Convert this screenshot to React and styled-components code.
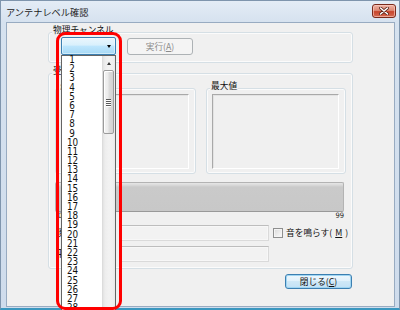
import React from 'react';
import styled, { createGlobalStyle } from 'styled-components';

const Global = createGlobalStyle`
  html, body { margin: 0; padding: 0; width: 400px; height: 310px; overflow: hidden; background: #ffffff; }
  body { font-family: "Noto Sans CJK JP", "Noto Sans", sans-serif; color: #000; }
  #root { width: 400px; height: 310px; }
`;

const ui = `"Noto Sans CJK JP", "Noto Sans", sans-serif`;
const narrow = `"Liberation Sans Narrow", "DejaVu Sans Condensed", "Liberation Sans", sans-serif`;

const Page = styled.div`
  position: relative;
  width: 400px;
  height: 310px;
  overflow: hidden;
`;

const Window = styled.div`
  box-sizing: border-box;
  width: 400px;
  height: 310px;
  display: flex;
  flex-direction: column;
  background: linear-gradient(180deg, #e4ecf6 0px, #d6e2ef 21px, #cfdcec 100%);
  border: 1px solid #7f95ad;
  border-bottom: 2px solid #3a97bf;
`;

const TitleBar = styled.div`
  height: 21px;
  flex: none;
  display: flex;
  justify-content: space-between;
  align-items: center;
  padding: 0 3px 0 5px;
`;

const TitleText = styled.span`
  font-family: ${ui};
  font-size: 9.2px;
  line-height: 12px;
  color: #1b1b1b;
  white-space: nowrap;
`;

const CloseBox = styled.div`
  box-sizing: border-box;
  width: 24px;
  height: 14px;
  align-self: flex-start;
  margin-top: 3px;
  border: 1px solid #7a2a1c;
  border-radius: 3px;
  background: linear-gradient(180deg, #eeb2a4 0%, #dd8a77 45%, #c8452c 55%, #d46a52 100%);
  box-shadow: inset 0 0 0 1px rgba(255, 210, 200, 0.6);
  display: flex;
  align-items: center;
  justify-content: center;
`;

const Client = styled.div`
  flex: 1;
  margin: 0 4px 1px 5px;
  border: 1px solid #98abc1;
  background: #f0f0f0;
  padding: 9px 0 0 41px;
  display: flex;
  flex-direction: column;
  align-items: flex-start;
`;

const Group = styled.div`
  box-sizing: border-box;
  width: ${p => p.$w}px;
  height: ${p => p.$h}px;
  margin-top: ${p => p.$mt || 0}px;
  border: 1px solid #d5dfe5;
  border-radius: 3px;
  box-shadow: inset 0 0 0 1px #fbfbfb;
  flex: none;
`;

const GroupLabel = styled.span`
  display: block;
  width: fit-content;
  height: 10px;
  margin: -8px 0 0 3px;
  padding: 0 1px;
  background: #f0f0f0;
  font-family: ${ui};
  font-size: 8.7px;
  line-height: 10px;
  white-space: nowrap;
  color: #111;
`;

const ChannelRow = styled.div`
  display: flex;
  align-items: flex-start;
  gap: 11px;
  margin: 2px 0 0 12px;
`;

const Combo = styled.div`
  box-sizing: border-box;
  width: 55px;
  height: 18px;
  border: 1px solid #3c7fb1;
  border-radius: 2px;
  background: linear-gradient(180deg, #eaf6fd 0%, #d9f0fc 45%, #bee6fd 50%, #a7d9f5 100%);
  box-shadow: inset 0 0 0 1px rgba(255, 255, 255, 0.45);
  display: flex;
  align-items: center;
  justify-content: flex-end;
  padding: 1px 4px 0 0;
`;

const ComboArrow = styled.span`
  width: 0;
  height: 0;
  border-left: 2.5px solid transparent;
  border-right: 2.5px solid transparent;
  border-top: 3px solid #000;
`;

const PushButton = styled.button`
  box-sizing: border-box;
  width: ${p => p.$w}px;
  height: ${p => p.$h}px;
  margin-top: ${p => p.$mt || 0}px;
  padding: 0;
  font-family: ${ui};
  font-size: 8.7px;
  line-height: 10px;
  border-radius: 3px;
  display: flex;
  align-items: center;
  justify-content: center;
  white-space: nowrap;
  color: ${p => (p.disabled ? '#8a8a8a' : '#111')};
  border: 1px solid ${p => (p.disabled ? '#adb2b5' : p.$default ? '#3c7fb1' : '#707070')};
  background: ${p =>
    p.disabled
      ? '#f4f4f4'
      : p.$default
      ? 'linear-gradient(180deg, #eef7fd 0%, #e1f1fb 45%, #cfe8f7 50%, #c2e1f5 100%)'
      : 'linear-gradient(180deg, #f2f2f2 0%, #ebebeb 45%, #dddddd 50%, #cfcfcf 100%)'};
  box-shadow: ${p => (p.$default ? 'inset 0 0 0 1px #9fd5f2' : 'none')};
  u { text-decoration-thickness: 1px; text-underline-offset: 1px; }
`;

const ValueRow = styled.div`
  display: flex;
  gap: 10px;
  margin: 12px 0 0 6px;
`;

const Sunken = styled.div`
  box-sizing: border-box;
  height: 75px;
  margin: 3px 6px 0 5px;
  border: 1px solid;
  border-color: #a9a9a9 #ffffff #ffffff #a9a9a9;
  box-shadow: 0 0 0 0 transparent, inset 1px 1px 0 #e3e3e3;
  background: #f0f0f0;
`;

const Progress = styled.div`
  box-sizing: border-box;
  width: 289px;
  height: 30px;
  margin: 8px 0 0 6px;
  border: 1px solid #b3b3b3;
  border-bottom-color: #999999;
  border-radius: 2px;
  background: linear-gradient(180deg, #e6e6e6 0px, #dadada 2px, #cacaca 4px, #c8c8c8 100%);
`;

const Scale = styled.div`
  box-sizing: border-box;
  width: 289px;
  height: 8px;
  margin-left: 6px;
  padding-left: 3px;
  display: flex;
  justify-content: space-between;
  font-family: ${narrow};
  font-size: 7.5px;
  line-height: 8px;
  color: #222;
`;

const FieldRow = styled.div`
  display: flex;
  align-items: center;
  height: 16px;
  margin: 5px 0 0 7px;
`;

const FieldLabel = styled.span`
  width: 64px;
  font-family: ${ui};
  font-size: 8.7px;
  line-height: 10px;
  white-space: nowrap;
  overflow: hidden;
`;

const TextField = styled.div`
  box-sizing: border-box;
  width: 149px;
  height: 16px;
  border: 1px solid #dadada;
  border-top-color: #bdbdbd;
  background: #f2f2f2;
  box-shadow: inset 0 0 0 1px #f7f7f7;
`;

const CheckLabel = styled.label`
  display: flex;
  align-items: center;
  gap: 3px;
  margin-left: 4px;
  font-family: ${ui};
  font-size: 8.7px;
  line-height: 10px;
  white-space: nowrap;
  color: #111;
  u { text-decoration-thickness: 1px; text-underline-offset: 1px; }
`;

const CheckBox = styled.span`
  box-sizing: border-box;
  width: 10px;
  height: 10px;
  border: 1px solid #8e8f8f;
  background: linear-gradient(135deg, #d8d8d8 0%, #eeeeee 60%, #fafafa 100%);
  box-shadow: inset 0 0 0 1px #f4f4f4;
`;

const Footer = styled.div`
  width: 305px;
  margin-top: 5px;
  display: flex;
  justify-content: flex-end;
  padding-right: 1px;
  box-sizing: border-box;
`;

/* drop-down list popup (overlay) */
const DropList = styled.div`
  position: absolute;
  left: 61px;
  top: 55px;
  width: 55px;
  height: 262px;
  box-sizing: border-box;
  border: 1px solid #646464;
  background: #ffffff;
  display: flex;
`;

const Items = styled.ul`
  flex: 1;
  list-style: none;
  margin: -1px 0 0 0;
  padding: 0 0 0 5px;
`;

const Item = styled.li`
  width: 10px;
  height: 9.2px;
  text-align: center;
  font-family: ${narrow};
  font-size: 9.8px;
  line-height: 9.2px;
  color: #111;
  white-space: nowrap;
`;

const ScrollBar = styled.div`
  width: 13px;
  display: flex;
  flex-direction: column;
  background: linear-gradient(90deg, #e2e2e2 0px, #ededed 2px, #f2f2f2 6px, #ededed 11px, #e6e6e6 13px);
  border-left: 1px solid #dcdcdc;
  box-sizing: border-box;
`;

const ScrollUp = styled.div`
  height: 13px;
  display: flex;
  align-items: center;
  justify-content: center;
  padding-top: 1px;
  box-sizing: border-box;
`;

const UpArrow = styled.span`
  width: 0;
  height: 0;
  border-left: 2.5px solid transparent;
  border-right: 2.5px solid transparent;
  border-bottom: 3px solid #3a3a3a;
`;

const Thumb = styled.div`
  box-sizing: border-box;
  height: 64px;
  margin: 1px 1px 0 0;
  border: 1px solid #9b9b9b;
  border-radius: 2px;
  background: linear-gradient(90deg, #f4f4f4 0%, #ebebeb 45%, #dcdcdc 55%, #d2d2d2 100%);
  box-shadow: inset 1px 1px 0 #ffffff;
  display: flex;
  flex-direction: column;
  align-items: center;
  justify-content: center;
  gap: 1px;
`;

const Grip = styled.span`
  width: 5px;
  height: 1px;
  background: #5a5a5a;
  box-shadow: 0 1px 0 #ffffff;
`;

/* red annotation frame drawn over the screenshot */
const Annotation = styled.div`
  position: absolute;
  left: 56px;
  top: 32px;
  width: 66px;
  height: 278px;
  box-sizing: border-box;
  border: 3px solid #ff0000;
  border-radius: 9px;
  pointer-events: none;
`;

const channels = Array.from({ length: 28 }, (_, i) => i + 1);

export default function App() {
  return (
    <>
      <Global />
      <Page>
        <Window>
          <TitleBar>
            <TitleText>アンテナレベル確認</TitleText>
            <CloseBox>
              <svg width="10" height="8" viewBox="0 0 10 8">
                <path d="M1.5 1 L8.5 7 M8.5 1 L1.5 7" stroke="#5a2016" strokeWidth="3" strokeLinecap="round" />
                <path d="M1.5 1 L8.5 7 M8.5 1 L1.5 7" stroke="#ffffff" strokeWidth="1.6" strokeLinecap="round" />
              </svg>
            </CloseBox>
          </TitleBar>
          <Client>
            <Group $w={305} $h={31}>
              <GroupLabel>物理チャンネル</GroupLabel>
              <ChannelRow>
                <Combo>
                  <ComboArrow />
                </Combo>
                <PushButton disabled $w={66} $h={17} $mt={1}>
                  実行(<u>A</u>)
                </PushButton>
              </ChannelRow>
            </Group>
            <Group $w={305} $h={196} $mt={10}>
              <GroupLabel>受信レベル</GroupLabel>
              <ValueRow>
                <Group $w={141} $h={86}>
                  <GroupLabel>最小値</GroupLabel>
                  <Sunken />
                </Group>
                <Group $w={140} $h={86}>
                  <GroupLabel>最大値</GroupLabel>
                  <Sunken />
                </Group>
              </ValueRow>
              <Progress />
              <Scale>
                <span>0</span>
                <span>99</span>
              </Scale>
              <FieldRow>
                <FieldLabel>現在値</FieldLabel>
                <TextField />
                <CheckLabel>
                  <CheckBox />
                  音を鳴らす(<u>M</u>)
                </CheckLabel>
              </FieldRow>
              <FieldRow>
                <FieldLabel>平均値</FieldLabel>
                <TextField />
              </FieldRow>
            </Group>
            <Footer>
              <PushButton $default $w={67} $h={15}>
                閉じる(<u>C</u>)
              </PushButton>
            </Footer>
          </Client>
        </Window>
        <DropList>
          <Items>
            {channels.map(n => (
              <Item key={n}>{n}</Item>
            ))}
          </Items>
          <ScrollBar>
            <ScrollUp>
              <UpArrow />
            </ScrollUp>
            <Thumb>
              <Grip />
              <Grip />
              <Grip />
              <Grip />
            </Thumb>
          </ScrollBar>
        </DropList>
        <Annotation />
      </Page>
    </>
  );
}
